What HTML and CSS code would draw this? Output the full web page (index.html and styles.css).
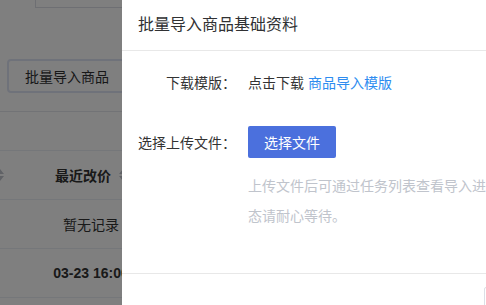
FILE: index.html
```html
<!DOCTYPE html>
<html lang="zh-CN">
<head>
    <meta charset="UTF-8">
    <meta name="viewport" content="width=device-width, initial-scale=1.0">
    <title>批量导入商品基础资料</title>
    <link rel="stylesheet" href="styles.css">
</head>
<body>
    <div class="page">
        <div class="search-box"></div>
        <div class="toolbar">
            <button class="btn-import">批量导入商品</button>
        </div>
        <div class="grid">
            <div class="row head">
                <div class="cell c1">
                    <svg class="sort" width="8" height="12" viewBox="0 0 8 12"><path d="M4 0L8 5H0z M4 12L0 7H8z" fill="#c0c4cc"/></svg>
                </div>
                <div class="cell c2">
                    最近改价
                    <svg class="sort" width="8" height="12" viewBox="0 0 8 12"><path d="M4 0L8 5H0z M4 12L0 7H8z" fill="#c0c4cc"/></svg>
                </div>
            </div>
            <div class="row">
                <div class="cell c1"></div>
                <div class="cell c2">暂无记录</div>
            </div>
            <div class="row">
                <div class="cell c1"></div>
                <div class="cell c2 strong">03-23 16:00</div>
            </div>
        </div>
    </div>

    <div class="mask"></div>

    <div class="drawer">
        <div class="drawer-header">批量导入商品基础资料</div>
        <div class="drawer-body">
            <div class="form-row">
                <div class="label">下载模版：</div>
                <div class="value">点击下载 <a class="link" href="#">商品导入模版</a></div>
            </div>
            <div class="form-row upload">
                <div class="label">选择上传文件：</div>
                <button class="btn-primary">选择文件</button>
            </div>
            <div class="hint">上传文件后可通过任务列表查看导入进度，任务处于处理中状态请耐心等待。</div>
        </div>
        <div class="drawer-footer">
            <button class="btn">取消</button>
            <button class="btn btn-ok">确定</button>
        </div>
    </div>
</body>
</html>
```

FILE: styles.css
```css
html, body {
    margin: 0;
    height: 100%;
    overflow: hidden;
}
body {
    font-family: "Liberation Sans", "Noto Sans CJK SC", sans-serif;
    font-size: 14px;
    color: #333;
    background: #fff;
}
button {
    font-family: inherit;
    font-size: 14px;
    cursor: pointer;
}

/* page behind the mask */
.search-box {
    margin-left: 35px;
    height: 7px;
    border-left: 1px solid #dcdfe6;
    border-bottom: 1px solid #dcdfe6;
}
.toolbar {
    padding: 51px 0 18px 7px;
    border-bottom: 1px solid #e4e7ed;
}
.btn-import {
    display: block;
    height: 34px;
    width: 130px;
    padding: 0 0 0 16px;
    text-align: left;
    background: #fff;
    color: #303133;
    border: 2px solid #dfe5f4;
    border-radius: 4px;
}
.grid {
    margin-top: 38px;
    border-top: 1px solid #ebeef5;
}
.row {
    display: flex;
    height: 48px;
    border-bottom: 1px solid #ebeef5;
}
.cell {
    display: flex;
    align-items: center;
    flex-shrink: 0;
}
.c1 {
    width: 4px;
    justify-content: flex-end;
}
.c2 {
    width: 174px;
    justify-content: center;
    gap: 8px;
    color: #333;
}
.head .c2, .strong {
    font-weight: bold;
}
.sort {
    flex-shrink: 0;
}

.mask {
    position: fixed;
    top: 0;
    left: 0;
    right: 0;
    bottom: 0;
    background: rgba(0, 0, 0, 0.5);
}

/* drawer */
.drawer {
    position: fixed;
    top: 0;
    left: 122px;
    width: 520px;
    background: #fff;
}
.drawer-header {
    height: 50px;
    line-height: 50px;
    padding: 0 16px;
    font-size: 16px;
    color: #303133;
    border-bottom: 1px solid #e8e8e8;
}
.drawer-body {
    padding: 15px 16px 42px;
}
.form-row {
    display: flex;
    align-items: center;
    height: 32px;
}
.form-row.upload {
    margin-top: 28px;
}
.label {
    width: 98px;
    margin-right: 12px;
    text-align: right;
    color: #333;
}
.value {
    color: #333;
}
.link {
    color: #2d8cf0;
    text-decoration: none;
}
.btn-primary {
    width: 88px;
    height: 32px;
    padding: 0;
    border: none;
    border-radius: 2px;
    background: #4b70dd;
    color: #fff;
}
.hint {
    width: 378px;
    margin: 13px 0 0 110px;
    line-height: 30px;
    color: #c0c4cc;
}
.drawer-footer {
    display: flex;
    justify-content: flex-end;
    gap: 10px;
    padding: 13px 16px;
    border-top: 1px solid #e8e8e8;
}
.btn {
    width: 66px;
    height: 32px;
    padding: 0;
    background: #fff;
    color: #606266;
    border: 1px solid #dcdfe6;
    border-radius: 2px;
}
.btn-ok {
    background: #4b70dd;
    border-color: #4b70dd;
    color: #fff;
}
```
